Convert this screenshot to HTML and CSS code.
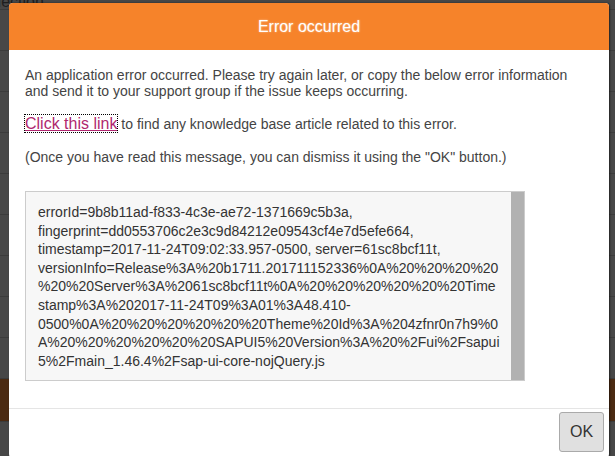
FILE: index.html
```html
<!DOCTYPE html>
<html lang="en">
<head>
  <meta charset="UTF-8" />
  <title>Error occurred</title>
  <link rel="stylesheet" href="styles.css">
</head>
<body>
  <div class="page">
    <div class="page-row top"><span class="page-text">Selection</span></div>
    <div class="page-row"></div>
    <div class="page-row"></div>
    <div class="page-row"></div>
    <div class="page-row"></div>
    <div class="page-row"></div>
    <div class="page-row"></div>
    <div class="page-row"></div>
    <div class="page-row"></div>
    <div class="page-row"></div>
    <div class="page-band"></div>
    <div class="page-row"></div>
  </div>

  <div class="dialog">
    <div class="dialog-header">Error occurred</div>
    <div class="dialog-body">
      <p>An application error occurred. Please try again later, or copy the below error information and send it to your support group if the issue keeps occurring.</p>
      <p><a href="#" class="kb-link">Click this link</a> to find any knowledge base article related to this error.</p>
      <p>(Once you have read this message, you can dismiss it using the "OK" button.)</p>
      <div class="error-box">
        <div class="error-text">errorId=9b8b11ad-f833-4c3e-ae72-1371669c5b3a, fingerprint=dd0553706c2e3c9d84212e09543cf4e7d5efe664, timestamp=2017-11-24T09:02:33.957-0500, server=61sc8bcf11t, versionInfo=Release%3A%20b1711.201711152336%0A%20%20%20%20%20%20Server%3A%2061sc8bcf11t%0A%20%20%20%20%20%20Timestamp%3A%202017-11-24T09%3A01%3A48.410-0500%0A%20%20%20%20%20%20Theme%20Id%3A%204zfnr0n7h9%0A%20%20%20%20%20%20SAPUI5%20Version%3A%20%2Fui%2Fsapui5%2Fmain_1.46.4%2Fsap-ui-core-nojQuery.js</div>
        <div class="error-scroll"></div>
      </div>
    </div>
    <div class="dialog-footer">
      <button class="ok-btn">OK</button>
    </div>
  </div>
</body>
</html>
```

FILE: styles.css
```css
body {
  margin: 0;
  font-family: "Liberation Sans", Arial, sans-serif;
  background: #474747;
  overflow: hidden;
}
.page {
  height: 456px;
  background: #474747;
}
.page-row {
  height: 40px;
  border-bottom: 1px solid #3b3b3b;
}
.page-row.top {
  height: 16px;
}
.page-text {
  display: block;
  margin: -7px 0 0 -22px;
  font-size: 16px;
  color: #1e1e1e;
}
.page-band {
  height: 42px;
  background: #4b2a12;
  border-bottom: 1px solid #3b3b3b;
}
.dialog {
  position: absolute;
  left: 9px;
  top: 3px;
  width: 600px;
  height: 455px;
  background: #fff;
  border-radius: 4px;
  box-shadow: 1px 0 2px rgba(0,0,0,0.5);
  display: flex;
  flex-direction: column;
  overflow: hidden;
}
.dialog-header {
  height: 47px;
  line-height: 47px;
  background: #f6832a;
  color: #fff;
  text-align: center;
  font-size: 16px;
  text-shadow: 0 0 2px rgba(255,255,255,0.6);
}
.dialog-body {
  padding: 17px 16px 0;
  color: #444;
  font-size: 14px;
  line-height: 16px;
}
.dialog-body p {
  margin: 0 0 17px;
}
.kb-link {
  color: #b0276f;
  font-size: 16px;
  outline: 1px dotted #000;
}
.error-box {
  display: flex;
  width: 500px;
  height: 190px;
  box-sizing: border-box;
  border: 1px solid #ccc;
  background: #f7f7f7;
  margin-top: 26px;
}
.error-text {
  flex: 1;
  padding: 11px 10px 0 12px;
  font-size: 14px;
  line-height: 18.6px;
  color: #333;
  overflow-wrap: anywhere;
}
.error-scroll {
  width: 13px;
  background: #b1b1b1;
}
.dialog-footer {
  margin-top: 27px;
  border-top: 1px solid #e5e5e5;
  padding: 3px 5px;
  display: flex;
  justify-content: flex-end;
}
.ok-btn {
  width: 45px;
  height: 40px;
  background: #e0e0e0;
  border: 1px solid #aaa;
  border-radius: 3px;
  font-family: inherit;
  font-size: 16px;
  color: #333;
}
```
